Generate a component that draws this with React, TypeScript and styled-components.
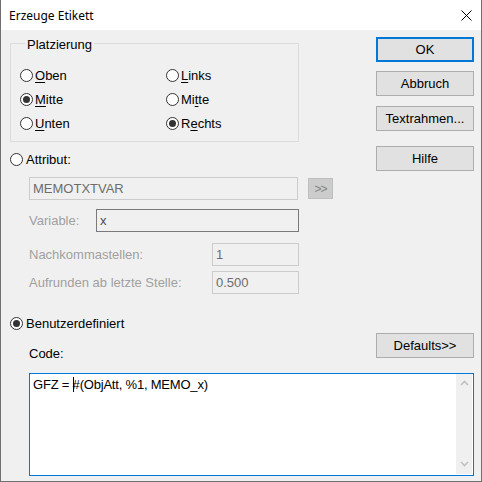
import React from "react"
import styled, { createGlobalStyle } from "styled-components"

const GlobalStyle = createGlobalStyle`
	html, body {
		margin: 0;
		padding: 0;
		background: #f0f0f0;
	}
`

const Window = styled.div`
	width: 482px;
	height: 482px;
	box-sizing: border-box;
	border: 1px solid #707070;
	border-top: none;
	display: flex;
	flex-direction: column;
	background: #f0f0f0;
	font: 13px "Liberation Sans", Arial, sans-serif;
	color: #000;
	overflow: hidden;
`

const TitleBar = styled.div`
	height: 30px;
	flex: none;
	display: flex;
	align-items: center;
	justify-content: space-between;
	background: #fff;
	padding-left: 8px;
	font: 12px "Segoe UI", "Noto Sans", sans-serif;
`

const CloseBox = styled.div`
	width: 30px;
	height: 30px;
	display: flex;
	align-items: center;
	justify-content: center;
`

const Body = styled.div`
	flex: 1;
	display: flex;
	flex-direction: column;
	padding: 7px 7px 0 9px;
`

const Top = styled.div`
	display: flex;
	justify-content: space-between;
`

const LeftCol = styled.div`
	width: 330px;
	display: flex;
	flex-direction: column;
`

const RightCol = styled.div`
	width: 98px;
	display: flex;
	flex-direction: column;
`

const GroupBox = styled.div`
	width: 289px;
	box-sizing: border-box;
	margin-top: 6px;
	border: 1px solid #dcdcdc;
	padding: 0 0 8px 9px;
`

const Caption = styled.div`
	width: fit-content;
	margin: -7px 0 0 5px;
	padding: 0 2px;
	line-height: 15px;
	background: #f0f0f0;
`

const RadioGrid = styled.div`
	margin-top: 13px;
	display: grid;
	grid-template-columns: 146px 1fr;
	grid-auto-rows: 20px;
	row-gap: 4px;
`

const RadioLabel = styled.label<{ $gap?: number }>`
	display: flex;
	align-items: center;
	gap: ${(p) => p.$gap ?? 2}px;
	height: 20px;
	white-space: nowrap;

	u {
		text-decoration-thickness: 1px;
		text-underline-offset: 2px;
	}
`

const RadioCircle = styled.span`
	width: 13px;
	height: 13px;
	box-sizing: border-box;
	border: 1px solid #333;
	border-radius: 50%;
	background: #fff;
	display: flex;
	align-items: center;
	justify-content: center;
	flex: none;
`

const RadioDot = styled.span`
	width: 7px;
	height: 7px;
	border-radius: 50%;
	background: #333;
`

const AttrRow = styled.div`
	margin-top: 7px;
`

const Fields = styled.div`
	padding-left: 19px;
	display: flex;
	flex-direction: column;
`

const FieldRow = styled.div<{ $top: number }>`
	margin-top: ${(p) => p.$top}px;
	height: 23px;
	display: flex;
	align-items: center;
`

const DimLabel = styled.span`
	color: #a0a0a0;
	flex: 1;
	white-space: nowrap;
`

const Edit = styled.div<{ $width: number; $enabled?: boolean }>`
	width: ${(p) => p.$width}px;
	height: 23px;
	box-sizing: border-box;
	border: 1px solid ${(p) => (p.$enabled ? "#7a7a7a" : "#cccccc")};
	background: #f0f0f0;
	color: ${(p) => (p.$enabled ? "#4d4d4d" : "#6d6d6d")};
	padding: 0 3px;
	line-height: 21px;
	flex: none;
`

const SmallButton = styled.div`
	margin-left: 10px;
	width: 25px;
	height: 21px;
	box-sizing: border-box;
	border: 1px solid #bfbfbf;
	background: #cccccc;
	color: #838383;
	font-size: 12px;
	display: flex;
	align-items: center;
	justify-content: center;
	letter-spacing: -1px;
`

const Button = styled.div<{ $top?: number; $default?: boolean }>`
	margin-top: ${(p) => p.$top ?? 0}px;
	height: 25px;
	box-sizing: border-box;
	border: ${(p) => (p.$default ? "2px solid #0078d7" : "1px solid #adadad")};
	background: #e1e1e1;
	display: flex;
	align-items: center;
	justify-content: center;
`

const CustomRow = styled.div`
	margin-top: 19px;
`

const CodeRow = styled.div`
	display: flex;
	justify-content: space-between;
`

const CodeLabel = styled.span`
	padding: 13px 0 0 19px;
	line-height: 16px;
`

const DefaultsButton = styled(Button)`
	width: 98px;
`

const CodeBox = styled.div`
	margin: 11px 0 0 19px;
	height: 103px;
	box-sizing: border-box;
	border: 1px solid #0078d7;
	background: #fff;
	display: flex;
	padding: 0 1px 1px 0;
`

const CodeText = styled.div`
	flex: 1;
	padding: 3px 0 0 3px;
	line-height: 15px;
	letter-spacing: -0.2px;
	white-space: pre;
`

const Caret = styled.span`
	display: inline-block;
	width: 1px;
	height: 15px;
	margin-right: -1px;
	background: #000;
	vertical-align: top;
`

const ScrollBar = styled.div`
	width: 16px;
	background: #f0f0f0;
	display: flex;
	flex-direction: column;
	justify-content: space-between;
	align-items: center;
	padding: 6px 0 7px;
`

type RadioProps = {
	checked?: boolean
	gap?: number
	children: React.ReactNode
}

const Radio = ({ checked, gap, children }: RadioProps) => (
	<RadioLabel $gap={gap}>
		<RadioCircle>{checked && <RadioDot />}</RadioCircle>
		<span>{children}</span>
	</RadioLabel>
)

const Chevron = ({ up }: { up?: boolean }) => (
	<svg width="9" height="6" viewBox="0 0 9 6">
		<path
			d={up ? "M1 5 L4.5 1.5 L8 5" : "M1 1 L4.5 4.5 L8 1"}
			fill="none"
			stroke="#c0c0c0"
			strokeWidth="1.6"
		/>
	</svg>
)

export default function App() {
	return (
		<>
			<GlobalStyle />
			<Window>
				<TitleBar>
					<span>Erzeuge Etikett</span>
					<CloseBox>
						<svg width="11" height="11" viewBox="0 0 11 11">
							<path d="M0.5 0.5 L10.5 10.5 M10.5 0.5 L0.5 10.5" stroke="#000" strokeWidth="1" />
						</svg>
					</CloseBox>
				</TitleBar>
				<Body>
					<Top>
						<LeftCol>
							<GroupBox>
								<Caption>Platzierung</Caption>
								<RadioGrid>
									<Radio>
										<u>O</u>ben
									</Radio>
									<Radio>
										<u>L</u>inks
									</Radio>
									<Radio checked>
										<u>M</u>itte
									</Radio>
									<Radio>
										Mi<u>t</u>te
									</Radio>
									<Radio>
										<u>U</u>nten
									</Radio>
									<Radio checked>
										R<u>e</u>chts
									</Radio>
								</RadioGrid>
							</GroupBox>
							<AttrRow>
								<Radio gap={3}>Attribut:</Radio>
							</AttrRow>
							<Fields>
								<FieldRow $top={8}>
									<Edit $width={269}>MEMOTXTVAR</Edit>
									<SmallButton>&gt;&gt;</SmallButton>
								</FieldRow>
								<FieldRow $top={9}>
									<DimLabel>Variable:</DimLabel>
									<Edit $width={203} $enabled style={{ marginRight: 41 }}>
										x
									</Edit>
								</FieldRow>
								<FieldRow $top={11}>
									<DimLabel>Nachkommastellen:</DimLabel>
									<Edit $width={87} style={{ marginRight: 41 }}>
										1
									</Edit>
								</FieldRow>
								<FieldRow $top={5}>
									<DimLabel>Aufrunden ab letzte Stelle:</DimLabel>
									<Edit $width={87} style={{ marginRight: 41 }}>
										0.500
									</Edit>
								</FieldRow>
							</Fields>
						</LeftCol>
						<RightCol>
							<Button $default>OK</Button>
							<Button $top={9}>Abbruch</Button>
							<Button $top={10}>Textrahmen...</Button>
							<Button $top={15}>Hilfe</Button>
						</RightCol>
					</Top>
					<CustomRow>
						<Radio checked gap={3}>
							Benutzerdefiniert
						</Radio>
					</CustomRow>
					<CodeRow>
						<CodeLabel>Code:</CodeLabel>
						<DefaultsButton>Defaults&gt;&gt;</DefaultsButton>
					</CodeRow>
					<CodeBox>
						<CodeText>
							GFZ = <Caret />#(ObjAtt, %1, MEMO_x)
						</CodeText>
						<ScrollBar>
							<Chevron up />
							<Chevron />
						</ScrollBar>
					</CodeBox>
				</Body>
			</Window>
		</>
	)
}
